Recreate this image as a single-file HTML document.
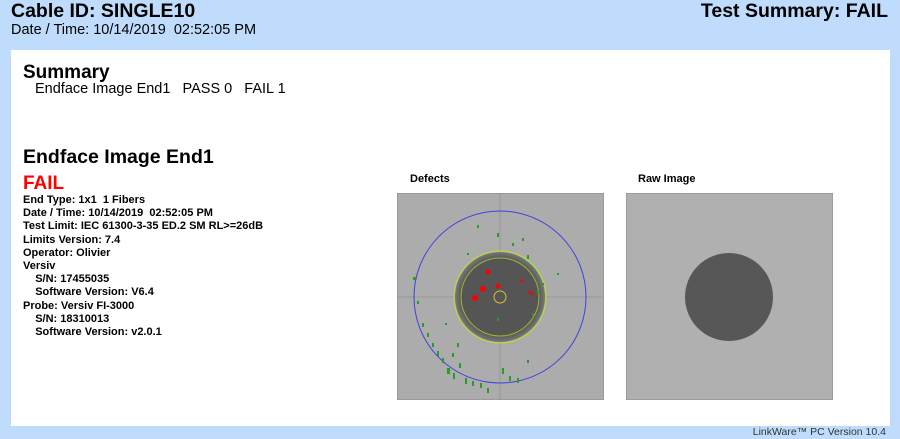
<!DOCTYPE html>
<html><head><meta charset="utf-8"><style>
body{margin:0;width:900px;height:439px;background:#c0dcfc;font-family:"Liberation Sans",Arial,sans-serif;position:relative;overflow:hidden;color:#000}
.a{position:absolute;white-space:nowrap}
#panel{position:absolute;left:11px;top:50px;width:879px;height:376px;background:#fff}
.d{font-size:11px;font-weight:bold;line-height:13.2px}
</style></head><body>
<div class="a" style="left:11px;top:0px;font-size:19.5px;font-weight:bold">Cable ID: SINGLE10</div>
<div class="a" style="right:12px;top:0px;font-size:19.5px;font-weight:bold">Test Summary: FAIL</div>
<div class="a" style="left:11px;top:22px;font-size:14.5px">Date / Time: 10/14/2019&nbsp; 02:52:05 PM</div>
<div id="panel"></div>
<div class="a" style="left:23px;top:62px;font-size:19px;font-weight:bold">Summary</div>
<div class="a" style="left:35px;top:81px;font-size:14.5px">Endface Image End1&nbsp;&nbsp; PASS 0&nbsp;&nbsp; FAIL 1</div>
<div class="a" style="left:23px;top:146px;font-size:19.5px;font-weight:bold">Endface Image End1</div>
<div class="a" style="left:23px;top:173px;font-size:19px;font-weight:bold;color:#f00">FAIL</div>
<div class="a d" style="left:23px;top:194px">End Type: 1x1&nbsp; 1 Fibers<br>Date / Time: 10/14/2019&nbsp; 02:52:05 PM<br>Test Limit: IEC 61300-3-35 ED.2 SM RL&gt;=26dB<br>Limits Version: 7.4<br>Operator: Olivier<br>Versiv<br>&nbsp;&nbsp;&nbsp;&nbsp;S/N: 17455035<br>&nbsp;&nbsp;&nbsp;&nbsp;Software Version: V6.4<br>Probe: Versiv FI-3000<br>&nbsp;&nbsp;&nbsp;&nbsp;S/N: 18310013<br>&nbsp;&nbsp;&nbsp;&nbsp;Software Version: v2.0.1</div>
<div class="a" style="left:410px;top:173px;font-size:11px;font-weight:bold">Defects</div>
<div class="a" style="left:638px;top:173px;font-size:11px;font-weight:bold">Raw Image</div>
<svg class="a" style="left:397px;top:193px" width="207" height="207">
<defs><radialGradient id="g"><stop offset="0.85" stop-color="#555"/><stop offset="1" stop-color="#777"/></radialGradient></defs>
<rect width="207" height="207" fill="#acacac" stroke="#888"/>
<line x1="103" y1="0" x2="103" y2="207" stroke="#888" stroke-width="0.6"/>
<line x1="0" y1="104" x2="207" y2="104" stroke="#888" stroke-width="0.6"/>
<circle cx="103" cy="104" r="45" fill="url(#g)"/>
<circle cx="103" cy="104" r="46" fill="none" stroke="#b8e02a" stroke-width="1"/>
<circle cx="103" cy="104" r="39" fill="none" stroke="#9ab82a" stroke-width="1"/>
<circle cx="103" cy="104" r="86" fill="none" stroke="#4040e0" stroke-width="1"/>
<circle cx="103" cy="104" r="6" fill="none" stroke="#e0c030" stroke-width="1"/>
<g fill="#f00"><circle cx="86" cy="96" r="3"/><circle cx="78" cy="105" r="3"/><circle cx="91" cy="79" r="2.5"/><circle cx="101" cy="93" r="2.5"/><circle cx="125" cy="88" r="1.5"/><rect x="131" y="99" width="6" height="2" transform="rotate(40 134 100)"/></g>
<g fill="#2a9a2a"><rect x="30" y="140" width="2" height="4"/><rect x="35" y="150" width="2" height="4"/><rect x="40" y="158" width="2" height="5"/><rect x="45" y="165" width="2" height="5"/><rect x="50" y="175" width="3" height="6"/><rect x="56" y="180" width="2" height="6"/><rect x="62" y="170" width="2" height="5"/><rect x="68" y="185" width="2" height="6"/><rect x="75" y="188" width="2" height="5"/><rect x="83" y="190" width="2" height="5"/><rect x="90" y="195" width="2" height="5"/><rect x="105" y="175" width="2" height="6"/><rect x="112" y="183" width="2" height="5"/><rect x="120" y="185" width="2" height="5"/><rect x="55" y="160" width="2" height="4"/><rect x="60" y="150" width="2" height="4"/><rect x="25" y="130" width="2" height="4"/><rect x="20" y="108" width="2" height="3"/><rect x="16" y="84" width="3" height="3"/><rect x="130" y="167" width="2" height="3"/><rect x="135" y="120" width="2" height="3"/><rect x="140" y="98" width="2" height="3"/><rect x="145" y="90" width="2" height="2"/><rect x="100" y="40" width="2" height="4"/><rect x="115" y="50" width="2" height="3"/><rect x="125" y="45" width="2" height="3"/><rect x="130" y="62" width="2" height="4"/><rect x="80" y="32" width="2" height="3"/><rect x="70" y="60" width="2" height="2"/><rect x="160" y="80" width="2" height="2"/><rect x="48" y="130" width="2" height="2"/><rect x="100" y="125" width="2" height="3"/></g>
</svg>
<svg class="a" style="left:626px;top:193px" width="207" height="207">
<rect width="207" height="207" fill="#b0b0b0" stroke="#888"/>
<circle cx="103" cy="104" r="44" fill="#575757"/>
</svg>
<div class="a" style="right:14px;top:426px;font-size:10.5px;color:#333">LinkWare™ PC Version 10.4</div>
</body></html>
